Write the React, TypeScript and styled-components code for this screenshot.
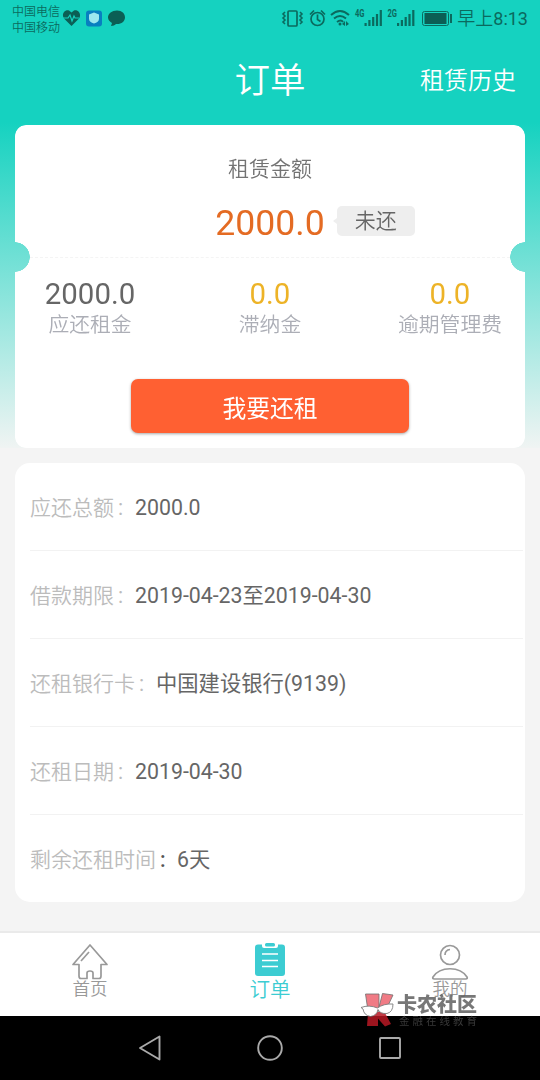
import React, { FunctionComponent, ReactNode } from 'react';
import styled, { createGlobalStyle } from 'styled-components';

const GlobalStyle = createGlobalStyle`
  * {
    box-sizing: border-box;
  }

  body {
    margin: 0;
    background-color: #f4f4f4;
    font-family: Roboto, 'Noto Sans CJK SC', sans-serif;
    font-weight: 350;
  }
`;

const Screen = styled.div`
  display: flex;
  flex-direction: column;
  width: 540px;
  height: 1080px;
  overflow: hidden;
  background-color: #f4f4f4;
`;

const Hero = styled.div`
  flex: none;
  height: 448px;
  background: linear-gradient(#15d2c0 0, #15d2c0 122px, #f0f4f3 448px);
`;

const StatusBar = styled.div`
  display: flex;
  align-items: center;
  justify-content: space-between;
  height: 36px;
  padding: 0 12px;
  color: #0b6a5e;
`;

const StatusGroup = styled.div`
  display: flex;
  align-items: center;
`;

const Carriers = styled.div`
  width: 50px;
  padding-top: 4px;
  font-size: 12px;
  line-height: 16.5px;
  white-space: nowrap;
`;

const StatusIcons = styled.svg`
  flex: none;
`;

const Clock = styled.span`
  width: 74px;
  padding-top: 1px;
  font-size: 18px;
  line-height: 20px;
  text-align: right;
  white-space: nowrap;

  span {
    font-weight: 400;
  }
`;

const Header = styled.header`
  display: grid;
  grid-template-columns: 1fr auto 1fr;
  align-items: center;
  height: 89px;
  padding: 0 24px;
  color: #fff;
`;

const PageTitle = styled.h1`
  grid-column: 2;
  margin: 0;
  font-size: 35.5px;
  font-weight: 350;
  line-height: 88px;
`;

const HistoryLink = styled.a`
  justify-self: end;
  font-size: 24px;
  line-height: 88px;
`;

const Ticket = styled.section`
  display: flex;
  flex-direction: column;
  align-items: center;
  height: 323px;
  margin: 0 15px;
  padding-top: 30px;
  border-radius: 11px;
  background-color: #fff;
  mask: radial-gradient(circle 15px at 0 132px, transparent 14.5px, #000 15px) left / 50% 100% no-repeat,
    radial-gradient(circle 15px at 100% 132px, transparent 14.5px, #000 15px) right / 50% 100% no-repeat;
`;

const TicketLabel = styled.div`
  height: 28px;
  color: #737373;
  font-size: 21px;
  line-height: 28px;
`;

const Amount = styled.div`
  display: grid;
  grid-template-columns: 1fr auto 1fr;
  align-items: center;
  width: 100%;
  height: 36px;
  margin-top: 21px;
  color: #e46b23;
  font-size: 35.6px;
  font-weight: 400;
  line-height: 38px;

  span {
    grid-column: 2;
  }
`;

const Badge = styled.div`
  position: relative;
  width: 78px;
  height: 30px;
  margin: -5px 0 0 12px;
  border-radius: 5px;
  background-color: #eee;
  color: #666;
  font-size: 21px;
  font-weight: 350;
  line-height: 31px;
  text-align: center;

  &::before {
    position: absolute;
    top: 12px;
    left: -4px;
    border: 3px solid transparent;
    border-left: 0;
    border-right: 4px solid #eee;
    content: '';
  }
`;

const Perforation = styled.div`
  width: 480px;
  margin-top: 17px;
  border-top: 1px dashed #f4f4f4;
`;

const Fees = styled.div`
  display: grid;
  grid-template-columns: repeat(3, 180px);
  margin-top: 19px;
`;

const Fee = styled.div<{ $color: string }>`
  color: #acaeb6;
  font-size: 20.8px;
  line-height: 28px;
  text-align: center;

  strong {
    display: block;
    color: ${(props) => props.$color};
    font-size: 29.4px;
    font-weight: 400;
    line-height: 34px;
  }
`;

const RepayButton = styled.button`
  width: 278px;
  height: 54px;
  margin-top: 40px;
  padding: 0;
  border: 0;
  border-radius: 7px;
  box-shadow: 0 1px 3px rgba(0, 0, 0, 0.35);
  background-color: #ff6032;
  color: #fff;
  font-family: inherit;
  font-size: 23.8px;
  font-weight: 400;
`;

const Details = styled.section`
  flex: none;
  height: 439px;
  margin: 15px 15px 29px;
  padding: 0 2px 0 15px;
  border-radius: 15px;
  background-color: #fff;
`;

const DetailRow = styled.div`
  display: flex;
  align-items: baseline;
  height: 88px;
  padding-top: 30px;
  border-bottom: 1px solid #f2f2f2;
  color: #666;
  font-size: 21.3px;
  line-height: 30px;
  white-space: pre;

  &:last-child {
    border-bottom: 0;
  }
`;

const DetailLabel = styled.span<{ $width: number }>`
  width: ${(props) => props.$width}px;
  color: #bcbcbc;
  font-size: 21px;
`;

const Colon = styled.span<{ $dark?: boolean }>`
  width: 21px;
  padding-left: 4px;
  color: ${(props) => (props.$dark ? '#555' : '#bcbcbc')};
  font-weight: ${(props) => (props.$dark ? 500 : 400)};
`;

const DetailValue = styled.span`
  font-weight: 380;
`;

const TabBar = styled.nav`
  display: grid;
  grid-template-columns: repeat(3, 1fr);
  flex: none;
  height: 85px;
  border-top: 2px solid #eaeaea;
  background-color: #fff;
`;

const Tab = styled.div<{ $active?: boolean }>`
  display: flex;
  flex-direction: column;
  align-items: center;
  padding-top: ${(props) => (props.$active ? 9 : 10)}px;
  color: ${(props) => (props.$active ? '#3cccd2' : '#999')};
  font-size: ${(props) => (props.$active ? 20.5 : 17.5)}px;
  line-height: 20px;

  svg {
    flex: none;
    margin-bottom: ${(props) => (props.$active ? 1 : -1)}px;
  }
`;

const SystemNav = styled.footer`
  flex: none;
  height: 64px;
  background-color: #000;
`;

const Watermark = styled.div`
  position: absolute;
  top: 991px;
  left: 360px;
  display: flex;
  gap: 1px;
  opacity: 0.85;
`;

const WatermarkText = styled.div`
  padding-top: 2px;
  color: #606060;
  font-size: 20px;
  font-weight: 900;
  line-height: 25px;
  white-space: nowrap;

  small {
    display: block;
    margin: -1px 0 0 2px;
    color: #424242;
    font-size: 10.5px;
    font-weight: 400;
    letter-spacing: 3px;
    line-height: 10px;
  }
`;

const details = [
  { label: '应还总额', value: '2000.0', width: 84 },
  { label: '借款期限', value: '2019-04-23至2019-04-30', width: 84 },
  { label: '还租银行卡', value: '中国建设银行(9139)', width: 105 },
  { label: '还租日期', value: '2019-04-30', width: 84 },
  { label: '剩余还租时间', value: '6天', width: 126, dark: true },
];

const NotificationIcons = () => (
  <StatusIcons width="66" height="36" viewBox="62 0 66 36">
    <path
      d="M71.5 26 64 18.5C61 14 65 9 69 10.5l2.5 2 2.5-2c4-1.500 8 3.500 5 8z"
      fill="#0b5f55"
    />
    <path
      d="M63 18h5l2-3 2 6 2-5 1 2h4"
      fill="none"
      stroke="#15d2c0"
      strokeWidth="1.2"
    />
    <rect x="86" y="10.5" width="16" height="16" rx="3" fill="#087fc0" />
    <path d="m94 12.500 5 2v4c0 3-2 4-5 5-3-1-5-2-5-5v-4z" fill="#9be7ef" />
    <path
      d="M117 10.500c5 0 8 3 8 7s-4 7-9 6.500c-1 1-3 2-5 2l1-3c-2-1-4-3-4-5.500 0-4 4-7 9-7z"
      fill="#0b5f55"
    />
  </StatusIcons>
);

const Signal = ({ x, label }: { x: number; label: string }) => (
  <g fill="currentColor">
    <text x={x} y="17" fontSize="10" fontWeight="700" textLength="9.5" lengthAdjust="spacingAndGlyphs">
      {label}
    </text>
    {[3, 6, 9, 12, 16].map((height, i) => (
      <rect key={height} x={x + 9.5 + i * 3.8} y={26 - height} width="2.2" height={height} />
    ))}
  </g>
);

const SystemIcons = () => (
  <StatusIcons width="175" height="36" viewBox="279 0 175 36">
    <g fill="none" stroke="currentColor" strokeWidth="1.7">
      <rect x="288" y="11" width="9" height="15" rx="1" />
      <path
        d="m285 12-2 2 2 2-2 2 2 2-2 2 2 2M300 12l2 2-2 2 2 2-2 2 2 2-2 2"
        strokeWidth="1.6"
      />
      <circle cx="317.5" cy="19" r="6.5" />
      <path d="M317.5 14.500v5l3 2M310 14.500l4-4M325 14.500l-4-4" />
      <path d="M331 15q9-8 18 0M334 18.500q6-5 12 0M337 22q4-3 6 0" strokeWidth="2" />
      <rect x="422.5" y="11.5" width="26" height="14" rx="2" strokeWidth="1" />
    </g>
    <circle cx="340" cy="24" r="1.5" fill="currentColor" />
    <path d="m342 24 3-3v5zM346 21l3 3-3 2z" fill="currentColor" />
    <Signal x={355} label="4G" />
    <Signal x={387.5} label="2G" />
    <rect x="424.5" y="13" width="22" height="11" fill="#0b5f55" />
    <rect x="450" y="14" width="2" height="9" fill="currentColor" />
  </StatusIcons>
);

const HomeIcon = () => (
  <svg width="40" height="37" viewBox="0 0 40 37" fill="none" stroke="currentColor" strokeWidth="1.7" strokeLinejoin="round">
    <path d="M20 2 3 21.500h6V33q0 2.500 2 2.500h6V30q0-2 3-2t3 2v5.500h6q2 0 2-2.500V21.500h6z" />
    <path d="m11 18 8-9" />
  </svg>
);

const OrderIcon = () => (
  <svg width="40" height="37" viewBox="0 0 40 37">
    <rect x="5" y="2.5" width="30" height="31.5" rx="3" fill="currentColor" />
    <path d="M12 1v3q0 2 2 2h12q2 0 2-2V1z" fill="#fff" />
    <rect x="15" y="1" width="10" height="3.5" rx="1.5" fill="currentColor" />
    <path d="M12 12h16M12 18.500h16M12 24.500h16" stroke="#fff" strokeWidth="1.5" />
  </svg>
);

const ProfileIcon = () => (
  <svg width="40" height="37" viewBox="0 0 40 37" fill="none" stroke="currentColor" strokeWidth="1.7">
    <circle cx="20" cy="12" r="9.5" />
    <path d="M15 12q0-5 5-5.500M4.500 36c-2 0-2-1-1.500-2 7-11 27-11 34 0 .5 1 .5 2-1.500 2z" />
  </svg>
);

const NavigationIcons = () => (
  <svg width="540" height="64" viewBox="0 0 540 64" fill="none" stroke="#aaa" strokeWidth="1.9" strokeLinejoin="round">
    <path d="M159.500 20.500v23L140 32z" />
    <circle cx="270" cy="32" r="11.8" />
    <rect x="380" y="22" width="20" height="20" rx="1" />
  </svg>
);

const WatermarkLogo = () => (
  <svg width="36" height="36" viewBox="0 0 36 36">
    <g fill="#ee6570" stroke="#555" strokeWidth="0.8">
      <path d="M5.500 3H19v17H8zM22.500 2.500 33 4l-7.500 16H18z" />
    </g>
    <path d="M8 22h10v13H7zM17 21h7.500L31 33l-6 2.500-8-9z" fill="#b81925" />
    <path
      d="M1 16.500q8-3 16.500.5 6-4.500 15.500-4 0 8-6 9.500-7 .5-9-4-1 6-7.500 7-6.500-1-7.500-7.500z"
      fill="#fff"
      stroke="#666"
      strokeWidth="0.9"
    />
  </svg>
);

interface TabItemProps {
  active?: boolean;
  icon: ReactNode;
  label: string;
}

const TabItem: FunctionComponent<TabItemProps> = ({ active, icon, label }) => (
  <Tab $active={active}>
    {icon}
    {label}
  </Tab>
);

const App: FunctionComponent = () => {
  return (
    <Screen>
      <GlobalStyle />
      <Hero>
        <StatusBar>
          <StatusGroup>
            <Carriers>
              <div>中国电信</div>
              <div>中国移动</div>
            </Carriers>
            <NotificationIcons />
          </StatusGroup>
          <StatusGroup>
            <SystemIcons />
            <Clock>
              早上<span>8:13</span>
            </Clock>
          </StatusGroup>
        </StatusBar>
        <Header>
          <PageTitle>订单</PageTitle>
          <HistoryLink>租赁历史</HistoryLink>
        </Header>
        <Ticket>
          <TicketLabel>租赁金额</TicketLabel>
          <Amount>
            <span>2000.0</span>
            <Badge>未还</Badge>
          </Amount>
          <Perforation />
          <Fees>
            <Fee $color="#666">
              <strong>2000.0</strong>应还租金
            </Fee>
            <Fee $color="#edb327">
              <strong>0.0</strong>滞纳金
            </Fee>
            <Fee $color="#edb327">
              <strong>0.0</strong>逾期管理费
            </Fee>
          </Fees>
          <RepayButton>我要还租</RepayButton>
        </Ticket>
      </Hero>
      <Details>
        {details.map(({ label, value, width, dark }) => (
          <DetailRow key={label}>
            <DetailLabel $width={width}>{label}</DetailLabel>
            <Colon $dark={dark}>:</Colon>
            <DetailValue>{value}</DetailValue>
          </DetailRow>
        ))}
      </Details>
      <TabBar>
        <TabItem icon={<HomeIcon />} label="首页" />
        <TabItem active icon={<OrderIcon />} label="订单" />
        <TabItem icon={<ProfileIcon />} label="我的" />
      </TabBar>
      <SystemNav>
        <NavigationIcons />
      </SystemNav>
      <Watermark>
        <WatermarkLogo />
        <WatermarkText>
          卡农社区
          <small>金融在线教育</small>
        </WatermarkText>
      </Watermark>
    </Screen>
  );
};

export default App;
